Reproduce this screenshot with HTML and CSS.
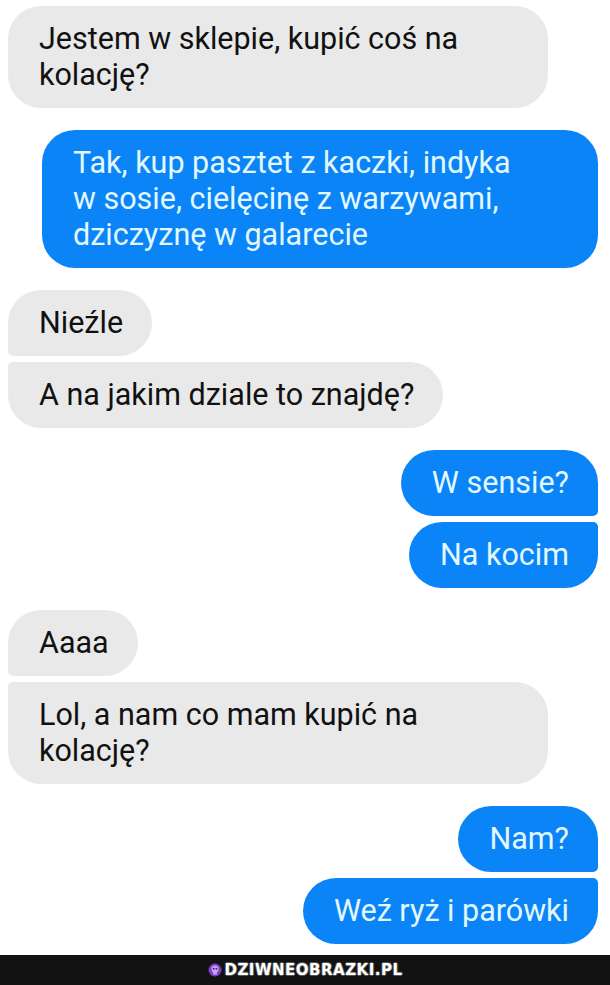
FILE: index.html
```html
<!DOCTYPE html>
<html lang="pl">
<head>
    <meta charset="UTF-8">
    <meta name="viewport" content="width=device-width, initial-scale=1.0">
    <title>Kolacja</title>
    <link rel="stylesheet" href="styles.css">
</head>
<body>
    <div id="chat">
        <div class="group them">
            <div class="bubble">Jestem w sklepie, kupić coś na kolację?</div>
        </div>

        <div class="group me">
            <div class="bubble wide">Tak, kup pasztet z kaczki, indyka<br>w sosie, cielęcinę z warzywami,<br>dziczyznę w galarecie</div>
        </div>

        <div class="group them">
            <div class="bubble">Nieźle</div>
            <div class="bubble">A na jakim dziale to znajdę?</div>
        </div>

        <div class="group me">
            <div class="bubble">W sensie?</div>
            <div class="bubble">Na kocim</div>
        </div>

        <div class="group them">
            <div class="bubble">Aaaa</div>
            <div class="bubble">Lol, a nam co mam kupić na kolację?</div>
        </div>

        <div class="group me">
            <div class="bubble">Nam?</div>
            <div class="bubble">Weź ryż i parówki</div>
        </div>
    </div>

    <div id="footer">
        <svg class="logo" width="14" height="14" viewBox="0 0 14 14">
            <circle cx="7" cy="7" r="6.5" fill="#7b3fc4"/>
            <circle cx="7" cy="6" r="3.6" fill="#c9a6f2"/>
            <circle cx="5.6" cy="5.8" r="1" fill="#4a1d80"/>
            <circle cx="8.4" cy="5.8" r="1" fill="#4a1d80"/>
            <rect x="5" y="9" width="4" height="2.4" rx="0.6" fill="#c9a6f2"/>
        </svg>
        <span class="brand">DZIWNEOBRAZKI.PL</span>
    </div>
</body>
</html>
```

FILE: styles.css
```css
body {
    margin: 0;
    padding: 0;
    background: #ffffff;
    font-family: Roboto, "Noto Sans", Arial, sans-serif;
    overflow: hidden;
}

#chat {
    display: flex;
    flex-direction: column;
    gap: 22px;
    padding: 6px 12px 0 8px;
    height: 955px;
    box-sizing: border-box;
}

.group {
    display: flex;
    flex-direction: column;
    gap: 6px;
}

.them {
    align-items: flex-start;
}

.me {
    align-items: flex-end;
}

.bubble {
    box-sizing: border-box;
    padding: 15px 29px 15px 31px;
    font-size: 30.5px;
    line-height: 36px;
    border-radius: 33px;
    width: fit-content;
}

.them .bubble {
    background: #e9e9e9;
    color: #111111;
    max-width: 540px;
}

.me .bubble {
    background: #0a84f6;
    color: #e2f8ff;
    max-width: 556px;
}

.me .wide {
    width: 556px;
}

.me .bubble:first-child:not(:only-child) {
    border-bottom-right-radius: 5px;
}

.me .bubble:last-child:not(:only-child) {
    border-top-right-radius: 5px;
}

.them .bubble:first-child:not(:only-child) {
    border-bottom-left-radius: 5px;
}

.them .bubble:last-child:not(:only-child) {
    border-top-left-radius: 5px;
}

#footer {
    height: 30px;
    background: #121212;
    display: flex;
    align-items: center;
    justify-content: center;
    gap: 3px;
}

.brand {
    font-family: "DejaVu Sans", sans-serif;
    font-weight: bold;
    font-size: 15px;
    letter-spacing: 0.5px;
    color: #ffffff;
    text-shadow: -1px 0 #555, 1px 0 #555, 0 -1px #555, 0 1px #555;
}
```
